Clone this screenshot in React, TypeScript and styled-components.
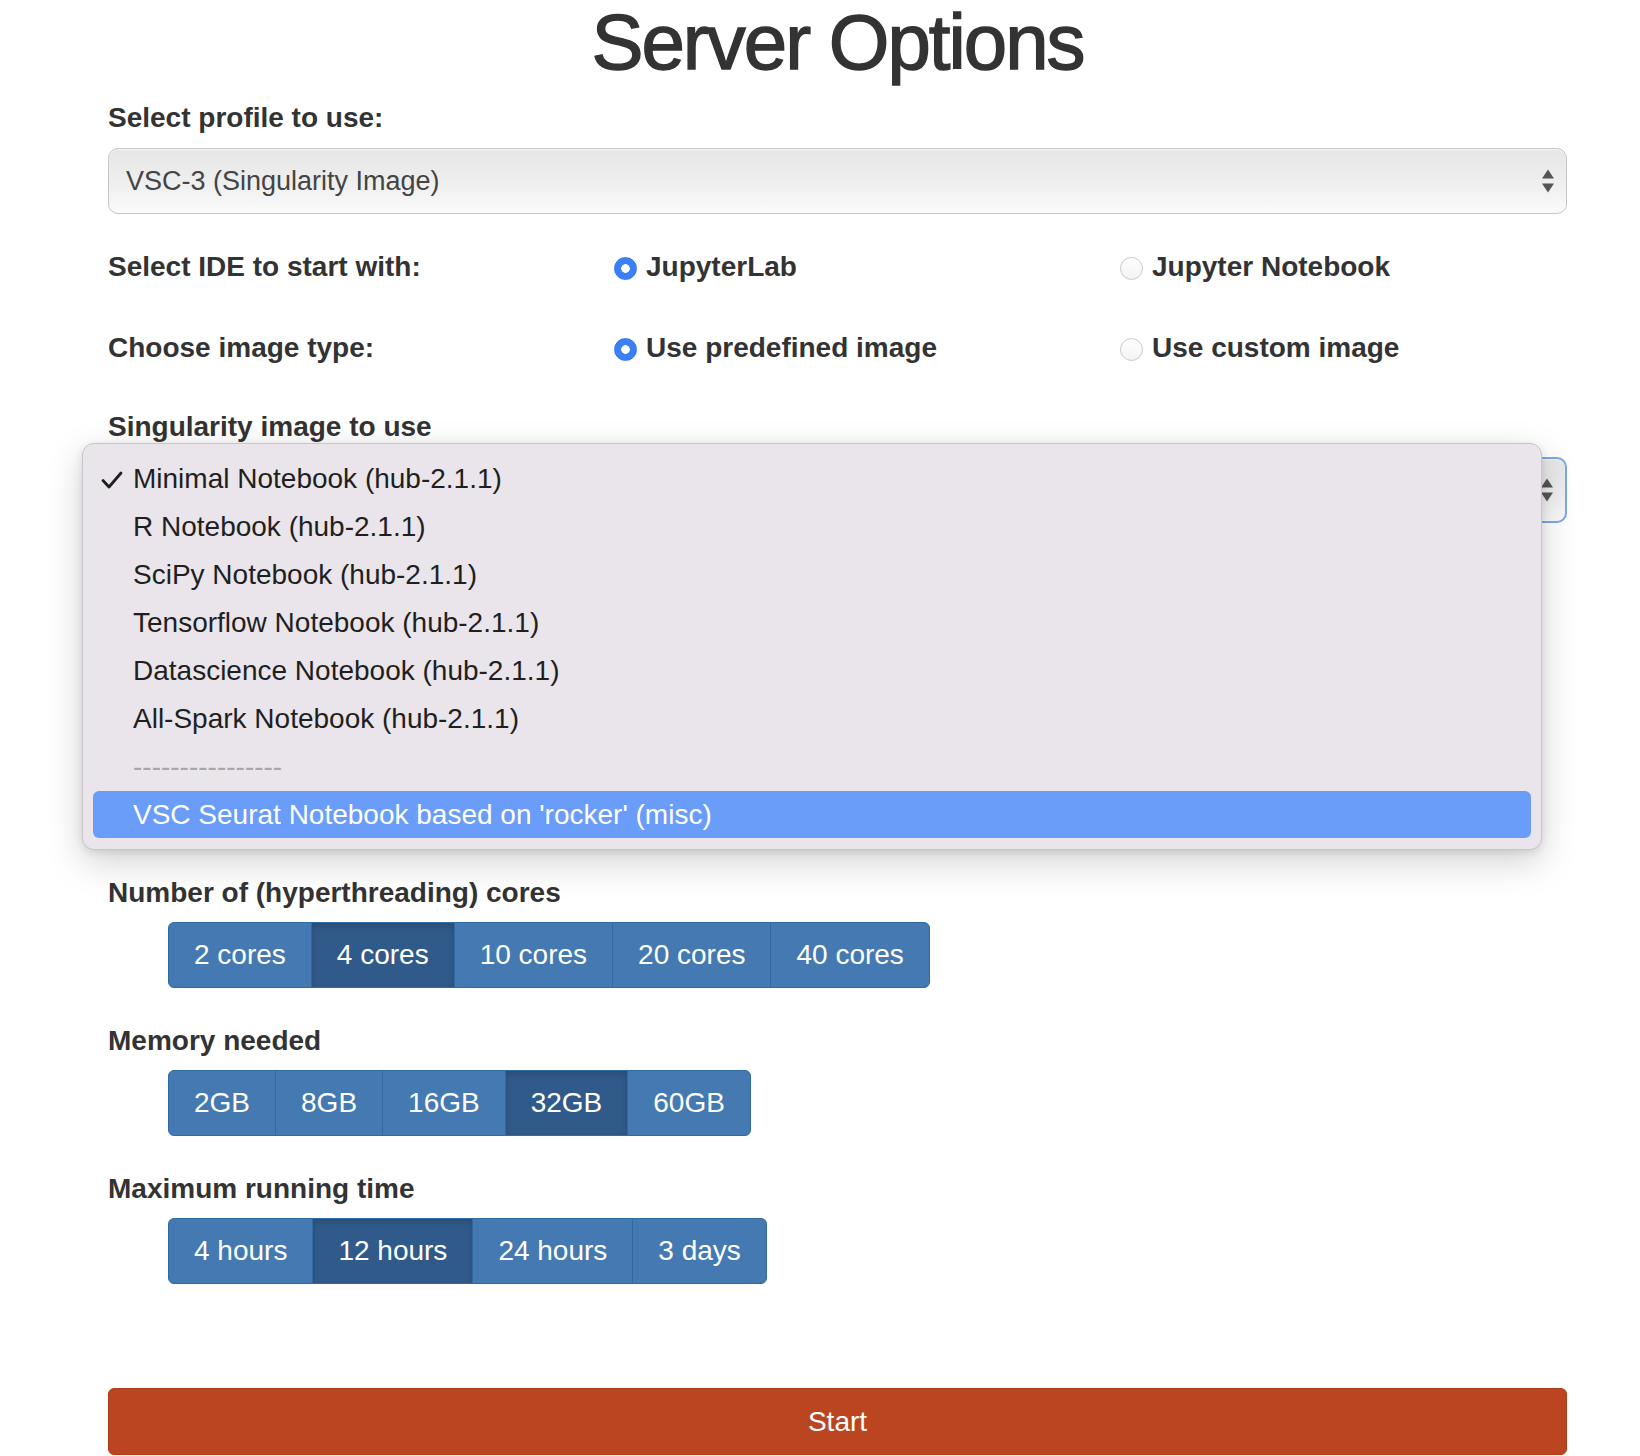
import React from "react";
import styled, { createGlobalStyle, css } from "styled-components";

const GlobalStyle = createGlobalStyle`
  html, body {
    margin: 0;
    padding: 0;
    background: #ffffff;
  }
  body {
    font-family: "Liberation Sans", Arial, Helvetica, sans-serif;
    color: #333333;
  }
`;

const Page = styled.main`
  width: 1459px;
  margin-left: 108px;
  padding-bottom: 40px;
`;

const Title = styled.h1`
  margin: 3px 0 0;
  font-size: 78px;
  line-height: 78px;
  font-weight: 400;
  letter-spacing: -2px;
  -webkit-text-stroke: 1.4px #333333;
  text-align: center;
  color: #333333;
`;

const Spaced = styled.div<{ $top: number }>`
  margin-top: ${(p) => p.$top}px;
`;

const Label = styled.label`
  display: block;
  padding-top: 2px;
  margin-bottom: -2px;
  font-size: 28px;
  line-height: 40px;
  font-weight: 700;
  color: #333333;
`;

const SelectBox = styled.div<{ $focused?: boolean }>`
  position: relative;
  box-sizing: border-box;
  height: 66px;
  margin-top: 12px;
  padding: 0 60px 0 17px;
  display: flex;
  align-items: center;
  border-radius: 10px;
  border: 1px solid #c6c6c6;
  background: linear-gradient(#e6e6e6, #f0f0f0 60%, #fbfbfb);
  box-shadow: inset 0 1px 1px rgba(255, 255, 255, 0.6);
  font-size: 27px;
  color: #444444;
  ${(p) =>
    p.$focused &&
    css`
      border: 2px solid #79a8ec;
    `}
`;

const Arrows = styled.span`
  position: absolute;
  right: 12px;
  top: 50%;
  transform: translateY(-50%);
  display: flex;
  flex-direction: column;
  gap: 5px;

  &::before,
  &::after {
    content: "";
    display: block;
    width: 0;
    height: 0;
    border-left: 6px solid transparent;
    border-right: 6px solid transparent;
  }
  &::before {
    border-bottom: 9px solid #555555;
  }
  &::after {
    border-top: 9px solid #555555;
  }
`;

const RadioRow = styled.div<{ $top: number }>`
  margin-top: ${(p) => p.$top}px;
  display: grid;
  grid-template-columns: 506px 506px 1fr;
  align-items: center;
  height: 40px;

  & > label {
    padding-top: 0;
    margin-bottom: 0;
  }
`;

const RadioOption = styled.div`
  display: flex;
  align-items: center;
  gap: 9px;
  font-size: 28px;
  line-height: 40px;
  font-weight: 700;
  color: #333333;
`;

const RadioDot = styled.span<{ $checked?: boolean }>`
  box-sizing: border-box;
  width: 23px;
  height: 23px;
  margin-top: 3px;
  border-radius: 50%;
  flex: none;
  ${(p) =>
    p.$checked
      ? css`
          background: radial-gradient(circle, #ffffff 0 4px, #3a80f6 4.6px);
          border: 1px solid #3475e6;
        `
      : css`
          background: linear-gradient(#ffffff, #f3f3f3);
          border: 1px solid #c9c9c9;
        `}
`;

const SelectWrap = styled.div`
  position: relative;
`;

const Popup = styled.ul`
  position: absolute;
  left: -26px;
  top: -14px;
  width: 1460px;
  box-sizing: border-box;
  margin: 0;
  padding: 11px 10px 11px;
  list-style: none;
  background: #e9e5ea;
  border: 1px solid #c9c6cb;
  border-radius: 12px;
  box-shadow: 0 12px 36px rgba(0, 0, 0, 0.18), 0 2px 8px rgba(0, 0, 0, 0.1);
  z-index: 5;
`;

const PopupItem = styled.li<{ $active?: boolean; $muted?: boolean }>`
  position: relative;
  height: 48px;
  line-height: 48px;
  padding-left: 40px;
  border-radius: 6px;
  font-size: 28px;
  color: ${(p) => (p.$muted ? "#a8a6aa" : "#1f1f1f")};
  ${(p) =>
    p.$active &&
    css`
      height: 47px;
      line-height: 47px;
      background: #6a9cf9;
      color: #ffffff;
    `}
`;

const Check = styled.svg`
  position: absolute;
  left: 8px;
  top: 16px;
`;

const BtnGroup = styled.div`
  display: inline-flex;
  margin-top: 11px;
  margin-left: 60px;
`;

const GroupBtn = styled.button<{ $active?: boolean }>`
  box-sizing: border-box;
  height: 66px;
  padding: 0 25px;
  margin-left: -1px;
  border: 1px solid #2f6aa3;
  background: ${(p) => (p.$active ? "#305a89" : "#4479b1")};
  box-shadow: ${(p) => (p.$active ? "inset 0 3px 6px rgba(0, 0, 0, 0.15)" : "none")};
  color: #ffffff;
  font-family: "Liberation Sans", Arial, sans-serif;
  font-size: 28px;
  line-height: 1;
  cursor: pointer;

  &:first-child {
    margin-left: 0;
    border-radius: 6px 0 0 6px;
  }
  &:last-child {
    border-radius: 0 6px 6px 0;
  }
`;

const StartButton = styled.button`
  display: block;
  width: 100%;
  height: 67px;
  margin-top: 104px;
  border: 1px solid #ad3e1c;
  border-radius: 6px;
  background: #bb4520;
  color: #ffffff;
  font-family: "Liberation Sans", Arial, sans-serif;
  font-size: 28px;
  cursor: pointer;
`;

const images = [
  "Minimal Notebook (hub-2.1.1)",
  "R Notebook (hub-2.1.1)",
  "SciPy Notebook (hub-2.1.1)",
  "Tensorflow Notebook (hub-2.1.1)",
  "Datascience Notebook (hub-2.1.1)",
  "All-Spark Notebook (hub-2.1.1)",
];

const cores = ["2 cores", "4 cores", "10 cores", "20 cores", "40 cores"];
const memory = ["2GB", "8GB", "16GB", "32GB", "60GB"];
const times = ["4 hours", "12 hours", "24 hours", "3 days"];

const Choice = (props: { items: string[]; active: string }) => (
  <BtnGroup>
    {props.items.map((item) => (
      <GroupBtn key={item} $active={item === props.active}>
        {item}
      </GroupBtn>
    ))}
  </BtnGroup>
);

const App = () => {
  return (
    <>
      <GlobalStyle />
      <Page>
        <Title>Server Options</Title>

        <Spaced $top={15}>
          <Label>Select profile to use:</Label>
          <SelectBox>
            VSC-3 (Singularity Image)
            <Arrows />
          </SelectBox>
        </Spaced>

        <RadioRow $top={33}>
          <Label>Select IDE to start with:</Label>
          <RadioOption>
            <RadioDot $checked />
            JupyterLab
          </RadioOption>
          <RadioOption>
            <RadioDot />
            Jupyter Notebook
          </RadioOption>
        </RadioRow>

        <RadioRow $top={41}>
          <Label>Choose image type:</Label>
          <RadioOption>
            <RadioDot $checked />
            Use predefined image
          </RadioOption>
          <RadioOption>
            <RadioDot />
            Use custom image
          </RadioOption>
        </RadioRow>

        <Spaced $top={37}>
          <Label>Singularity image to use</Label>
          <SelectWrap>
            <SelectBox $focused>
              <Arrows />
            </SelectBox>
            <Popup>
              {images.map((name, i) => (
                <PopupItem key={name}>
                  {i === 0 ? (
                    <Check width="22" height="18" viewBox="0 0 22 18">
                      <path
                        d="M2 9.5 L8 16 L20 2"
                        fill="none"
                        stroke="#1f1f1f"
                        strokeWidth="2.8"
                        strokeLinecap="round"
                        strokeLinejoin="round"
                      />
                    </Check>
                  ) : null}
                  {name}
                </PopupItem>
              ))}
              <PopupItem $muted>----------------</PopupItem>
              <PopupItem $active>VSC Seurat Notebook based on 'rocker' (misc)</PopupItem>
            </Popup>
          </SelectWrap>
        </Spaced>

        <Spaced $top={348}>
          <Label>Number of (hyperthreading) cores</Label>
          <Choice items={cores} active="4 cores" />
        </Spaced>

        <Spaced $top={31}>
          <Label>Memory needed</Label>
          <Choice items={memory} active="32GB" />
        </Spaced>

        <Spaced $top={31}>
          <Label>Maximum running time</Label>
          <Choice items={times} active="12 hours" />
        </Spaced>

        <StartButton>Start</StartButton>
      </Page>
    </>
  );
};

export default App;
